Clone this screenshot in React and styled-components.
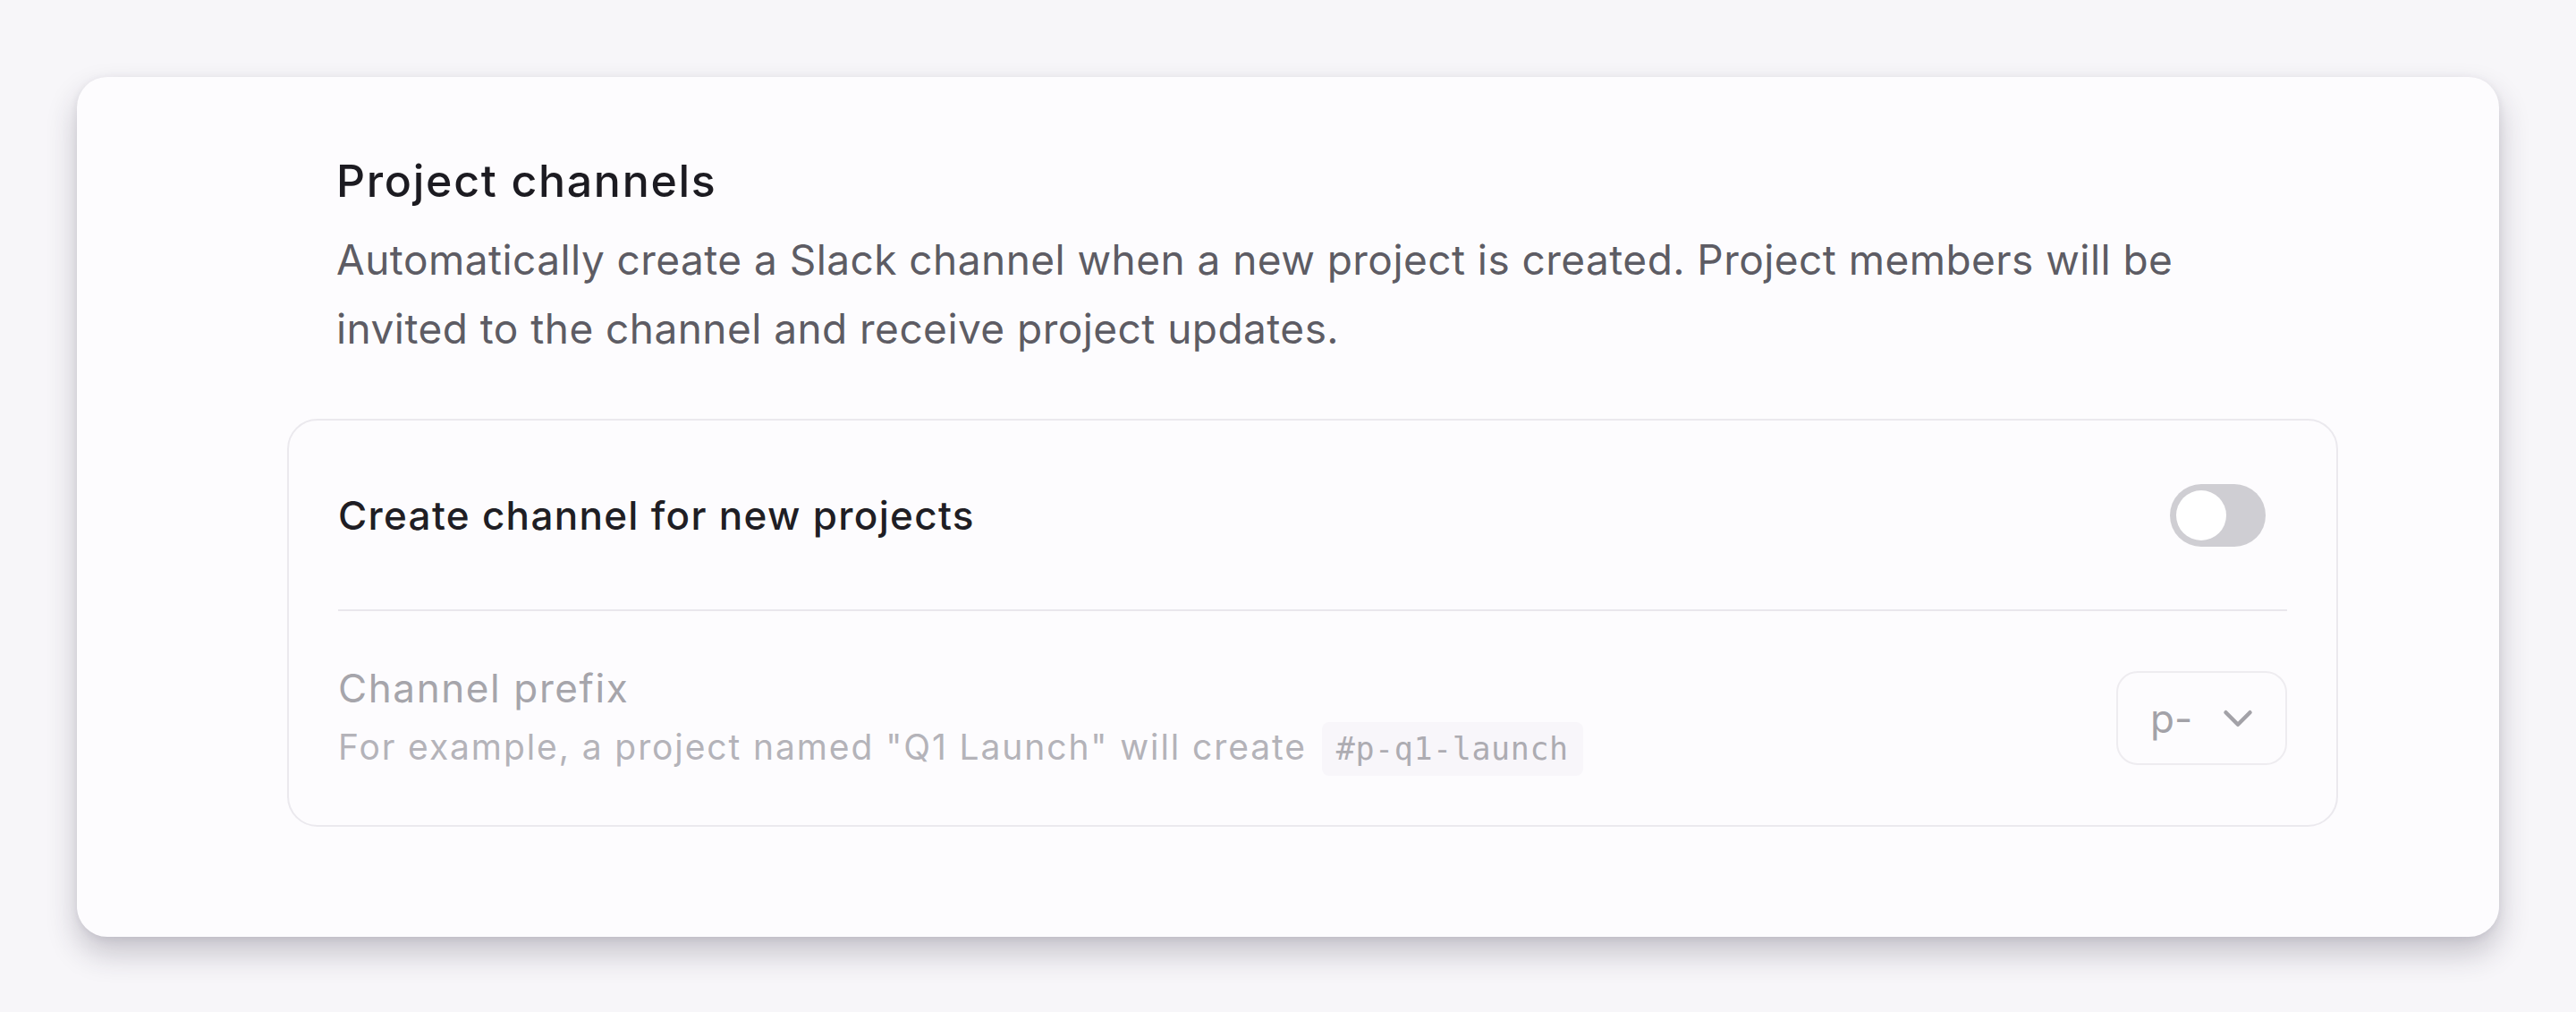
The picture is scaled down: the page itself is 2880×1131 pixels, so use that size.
import styled, { createGlobalStyle } from "styled-components"
import { ChevronDown } from "lucide-react"

const GlobalStyle = createGlobalStyle`
  html, body {
    margin: 0;
    padding: 0;
    background: #f7f6f9;
    font-family: Inter, "Noto Sans", sans-serif;
  }
`

const App = () => {
  return (
    <Page>
      <GlobalStyle />
      <Card>
        <Header>
          <Title>Project channels</Title>
          <Description>
            Automatically create a Slack channel when a new project is created. Project members will be
            invited to the channel and receive project updates.
          </Description>
        </Header>
        <Panel>
          <Row>
            <RowLabel>Create channel for new projects</RowLabel>
            <Toggle role="switch" aria-checked="false">
              <Knob />
            </Toggle>
          </Row>
          <Divider />
          <Row $tall>
            <TextHold>
              <MutedLabel>Channel prefix</MutedLabel>
              <Hint>
                For example, a project named "Q1 Launch" will create <Code>#p-q1-launch</Code>
              </Hint>
            </TextHold>
            <Select>
              <span>p-</span>
              <ChevronDown size={54} strokeWidth={2} />
            </Select>
          </Row>
        </Panel>
      </Card>
    </Page>
  )
}

export default App

const Page = styled.div`
  width: 2880px;
  height: 1131px;
  padding: 86px 86px 0 86px;
  box-sizing: border-box;
`

const Card = styled.div`
  background: #fdfcfe;
  border-radius: 34px;
  box-shadow: 0 18px 34px rgba(40, 34, 60, 0.24), 0 2px 10px rgba(40, 34, 60, 0.08);
  padding: 86px 180px 123px 235px;
`

const Header = styled.div`
  padding-left: 55px;
  margin-bottom: 62px;
`

const Title = styled.h3`
  margin: 0 0 20px 0;
  font-size: 50px;
  line-height: 60px;
  font-weight: 500;
  color: #1c1b21;
  letter-spacing: 1.7px;
`

const Description = styled.p`
  margin: 0;
  max-width: 2120px;
  font-size: 46px;
  line-height: 77px;
  color: #5d5c64;
  letter-spacing: 0.45px;
`

const Panel = styled.div`
  border: 2px solid #ebe9ee;
  border-radius: 34px;
  padding: 0 55px;
`

const Row = styled.div`
  display: flex;
  align-items: center;
  justify-content: space-between;
  height: ${(p) => (p.$tall ? "239px" : "211px")};
`

const RowLabel = styled.div`
  font-size: 44px;
  font-weight: 500;
  color: #1f1e24;
  letter-spacing: 1.3px;
`

const Toggle = styled.div`
  width: 107px;
  height: 70px;
  border-radius: 35px;
  background: #cfced3;
  padding: 7px;
  box-sizing: border-box;
  margin-right: 24px;
  display: flex;
  align-items: center;
`

const Knob = styled.div`
  width: 56px;
  height: 56px;
  border-radius: 50%;
  background: #ffffff;
`

const Divider = styled.div`
  height: 2px;
  background: #e9e7ec;
`

const TextHold = styled.div`
  display: flex;
  flex-direction: column;
  gap: 6px;
`

const MutedLabel = styled.div`
  font-size: 44px;
  line-height: 60px;
  color: #a6a5ab;
  letter-spacing: 1.6px;
`

const Hint = styled.div`
  font-size: 39px;
  line-height: 60px;
  color: #b4b3b9;
  letter-spacing: 1.9px;
`

const Code = styled.code`
  font-family: "DejaVu Sans Mono", "Liberation Mono", monospace;
  font-size: 35px;
  letter-spacing: 0.6px;
  color: #adacb2;
  background: #f8f6fa;
  border-radius: 8px;
  padding: 10px 16px;
  margin-left: 4px;
`

const Select = styled.div`
  width: 191px;
  height: 105px;
  box-sizing: border-box;
  border: 2px solid #eeecf0;
  border-radius: 24px;
  display: flex;
  align-items: center;
  justify-content: space-between;
  padding: 0 26px 0 36px;
  font-size: 44px;
  color: #a3a2a8;
  svg {
    color: #a3a2a8;
  }
`
